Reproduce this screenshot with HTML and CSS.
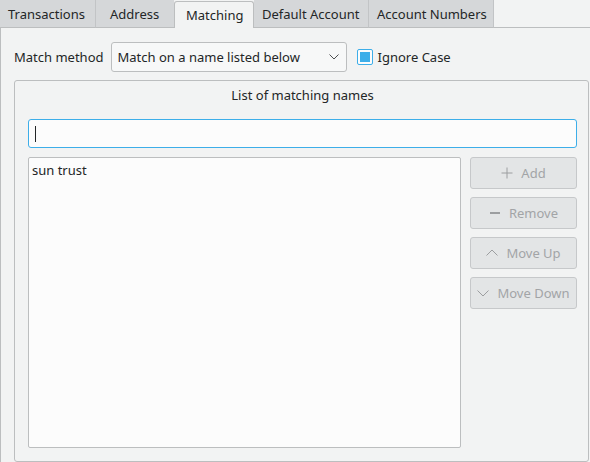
FILE: index.html
```html
<!DOCTYPE html>
<html>
<head>
<meta charset="utf-8">
<link rel="stylesheet" href="styles.css">
</head>
<body>
<div class="tabbar">
  <div class="tab">Transactions</div>
  <div class="tab">Address</div>
  <div class="tab active">Matching</div>
  <div class="tab">Default Account</div>
  <div class="tab">Account Numbers</div>
  <div class="tabfill"></div>
</div>
<div class="pane">
  <div class="method-row">
    <span class="label">Match method</span>
    <div class="combo">
      <span>Match on a name listed below</span>
      <svg class="chev" width="10" height="6" viewBox="0 0 10 6"><path d="M0.5 0.5 L5 5 L9.5 0.5" fill="none" stroke="#4d4f51" stroke-width="1"/></svg>
    </div>
    <div class="check"><div class="check-inner"></div></div>
    <span class="label">Ignore Case</span>
  </div>
  <div class="group">
    <div class="group-title">List of matching names</div>
    <div class="edit"><div class="caret"></div></div>
    <div class="list-row">
      <div class="list"><div class="item">sun trust</div></div>
      <div class="buttons">
        <div class="btn"><svg width="12" height="12" viewBox="0 0 12 12"><path d="M6 0.5 V11.5 M0.5 6 H11.5" stroke="#9c9ea0" stroke-width="1"/></svg><span>Add</span></div>
        <div class="btn"><svg width="12" height="12" viewBox="0 0 12 12"><path d="M1 6 H11" stroke="#9c9ea0" stroke-width="2"/></svg><span>Remove</span></div>
        <div class="btn"><svg width="12" height="12" viewBox="0 0 12 12"><path d="M0.5 8.5 L6 3 L11.5 8.5" fill="none" stroke="#9c9ea0" stroke-width="1"/></svg><span>Move Up</span></div>
        <div class="btn"><svg width="12" height="12" viewBox="0 0 12 12"><path d="M0.5 3.5 L6 9 L11.5 3.5" fill="none" stroke="#9c9ea0" stroke-width="1"/></svg><span>Move Down</span></div>
      </div>
    </div>
  </div>
</div>
</body>
</html>
```
FILE: styles.css
```css
html, body {
  margin: 0;
  padding: 0;
  background: #f2f3f3;
  font-family: "Noto Sans", "DejaVu Sans", sans-serif;
  font-size: 13px;
  color: #232627;
  overflow: hidden;
}
.tabbar {
  display: flex;
  height: 28px;
}
.tab {
  box-sizing: border-box;
  height: 28px;
  padding: 6px 8px 0 8px;
  background: #d5d7d9;
  border-right: 1px solid #c2c4c6;
  border-bottom: 1px solid #bcbebf;
  white-space: nowrap;
  line-height: 17px;
}
.tab:nth-child(1) { width: 96px; }
.tab:nth-child(2) { width: 78px; padding-left: 14px; }
.tab:nth-child(3) { width: 80px; }
.tab:nth-child(4) { width: 115px; }
.tab:nth-child(5) { width: 125px; }
.tab.active {
  background: #f2f3f3;
  border: 1px solid #bcbebf;
  border-bottom: none;
  border-radius: 3px 3px 0 0;
  margin-top: 1px;
  height: 27px;
  padding: 5px 10px 0 11px;
}
.tab:nth-child(2) { border-right: none; }
.tabfill {
  flex: 1;
  border-bottom: 1px solid #bcbebf;
}
.pane {
  border-left: 1px solid #bcbebf;
  padding: 14px 0 0 13px;
}
.method-row {
  display: flex;
  align-items: center;
  height: 30px;
}
.label {
  line-height: 17px;
  white-space: nowrap;
}
.combo {
  box-sizing: border-box;
  margin-left: 7px;
  width: 236px;
  height: 30px;
  border: 1px solid #bcbebf;
  border-radius: 3px;
  background: #f7f8f8;
  display: flex;
  align-items: center;
  justify-content: space-between;
  padding: 0 6px 0 6px;
}
.chev { margin-right: 1px; }
.check {
  box-sizing: border-box;
  margin-left: 10px;
  margin-right: 5px;
  width: 16px;
  height: 16px;
  border: 1px solid #3daee9;
  border-radius: 2px;
  background: #fcfcfc;
  padding: 2px;
}
.check-inner {
  width: 10px;
  height: 10px;
  background: #3daee9;
}
.group {
  box-sizing: border-box;
  margin-top: 8px;
  width: 575px;
  height: 382px;
  border: 1px solid #bcbebf;
  border-radius: 3px;
  padding: 0 11px 12px 13px;
}
.group-title {
  text-align: center;
  line-height: 17px;
  padding: 6px 0 0 0;
  height: 32px;
  box-sizing: border-box;
}
.edit {
  box-sizing: border-box;
  margin-top: 6px;
  height: 29px;
  border: 1px solid #3daee9;
  border-radius: 3px;
  background: #fcfcfc;
  padding: 6px 0 0 6px;
}
.caret {
  width: 1px;
  height: 16px;
  background: #232627;
}
.list-row {
  display: flex;
  margin-top: 9px;
  gap: 9px;
}
.list {
  box-sizing: border-box;
  width: 434px;
  height: 291px;
  border: 1px solid #bcbebf;
  border-radius: 2px;
  background: #fcfcfc;
  padding: 4px 3px;
}
.item { line-height: 17px; }
.buttons {
  display: flex;
  flex-direction: column;
  gap: 8px;
}
.btn {
  box-sizing: border-box;
  width: 107px;
  height: 32px;
  border: 1px solid #c6c8ca;
  border-radius: 3px;
  background: #e3e5e6;
  color: #a2a4a6;
  display: flex;
  align-items: center;
  justify-content: center;
  gap: 8px;
  padding-bottom: 1px;
}
```
